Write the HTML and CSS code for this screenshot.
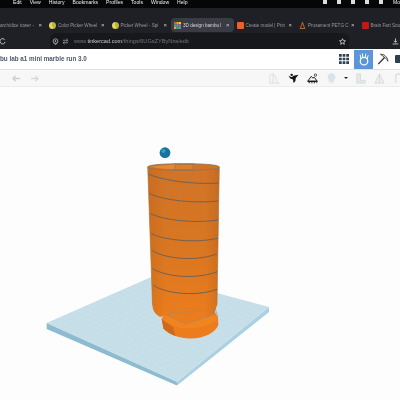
FILE: index.html
```html
<!DOCTYPE html>
<html lang="en">

<head>
	<meta charset="UTF-8">
	<title>Tinkercad - 3D design</title>
	<link rel="stylesheet" href="styles.css">
</head>

<body>
	<div class="menubar">
		<div class="menu-items">
			<span>Edit</span><span>View</span><span>History</span><span>Bookmarks</span><span>Profiles</span><span>Tools</span><span>Window</span><span>Help</span>
		</div>
		<div class="menu-status">
			<i class="status-dot"></i><i class="status-dot"></i><i class="status-dot"></i><i class="status-dot"></i><i class="status-dot"></i>
			<span>Mo</span>
		</div>
	</div>

	<div class="tabstrip">
		<div class="tab tab-first"><span class="tab-label">arch/dice tower -</span><span class="tab-close">×</span></div>
		<div class="tab"><i class="favicon fav-wheel"></i><span class="tab-label">Color Picker Wheel</span><span class="tab-close">×</span></div>
		<div class="tab"><i class="favicon fav-wheel"></i><span class="tab-label">Picker Wheel - Spi</span><span class="tab-close">×</span></div>
		<div class="tab tab-active">
			<svg class="favicon" viewBox="0 0 3 3"><rect width="1" height="1" fill="#e5534b"/><rect x="1" width="1" height="1" fill="#f0a030"/><rect x="2" width="1" height="1" fill="#e8d040"/><rect y="1" width="1" height="1" fill="#48a868"/><rect x="1" y="1" width="1" height="1" fill="#3fa0d8"/><rect x="2" y="1" width="1" height="1" fill="#e5534b"/><rect y="2" width="1" height="1" fill="#f0a030"/><rect x="1" y="2" width="1" height="1" fill="#48a868"/><rect x="2" y="2" width="1" height="1" fill="#3fa0d8"/></svg>
			<span class="tab-label">3D design bambu l</span><span class="tab-close">×</span>
		</div>
		<div class="tab"><i class="favicon fav-orange"></i><span class="tab-label">Create model | Prin</span><span class="tab-close">×</span></div>
		<div class="tab">
			<svg class="favicon" viewBox="0 0 8 8"><path d="M4 0.5 L6.5 7.5 H1.5 Z" fill="none" stroke="#b0603a" stroke-width="1.2"/></svg>
			<span class="tab-label">Prusament PETG C</span><span class="tab-close">×</span>
		</div>
		<div class="tab tab-last"><i class="favicon fav-red"></i><span class="tab-label">Brain Fart Sou</span></div>
	</div>

	<div class="addressbar">
		<svg class="reload" viewBox="0 0 8 8"><path d="M6.5 2 A3 3 0 1 0 7 4.5" fill="none" stroke="#ddd" stroke-width="1"/></svg>
		<div class="omnibox">
			<svg class="omni-icon" viewBox="0 0 8 8"><circle cx="4" cy="3.6" r="2.7" fill="none" stroke="#bbb" stroke-width="0.9"/><circle cx="4" cy="3.6" r="0.9" fill="#bbb"/><path d="M2.4 6 L4 7.8 L5.6 6" fill="none" stroke="#bbb" stroke-width="0.8"/></svg>
			<svg class="omni-icon" viewBox="0 0 8 8"><path d="M1 2.6 H6.5 M5 1 L6.8 2.6 L5 4.2 M7 5.4 H1.5 M3 3.8 L1.2 5.4 L3 7" fill="none" stroke="#aaa" stroke-width="0.8"/></svg>
			<span class="url">www.<b>tinkercad.com</b>/things/6UGsZYByNza/edit</span>
			<svg class="star" viewBox="0 0 8 8"><path d="M4 0.8 L5 3 L7.4 3.2 L5.5 4.8 L6.1 7.2 L4 5.9 L1.9 7.2 L2.5 4.8 L0.6 3.2 L3 3 Z" fill="none" stroke="#ddd" stroke-width="0.9"/></svg>
		</div>
		<svg class="download" viewBox="0 0 8 8"><path d="M4 0.5 V4.8 M2.2 3.2 L4 5 L5.8 3.2 M0.8 6.8 H7.2" fill="none" stroke="#ccc" stroke-width="1"/></svg>
	</div>

	<div class="titlebar">
		<span class="design-name">bu lab a1 mini marble run 3.0</span>
		<div class="title-tools">
			<svg class="grid-icon" viewBox="0 0 11 11"><path d="M0 0h3v3H0zM4 0h3v3H4zM8 0h3v3H8zM0 4h3v3H0zM4 4h3v3H4zM8 4h3v3H8zM0 8h3v3H0zM4 8h3v3H4zM8 8h3v3H8z" fill="#2c3e50"/></svg>
			<div class="mode-tile">
				<svg viewBox="0 0 14 16"><circle cx="7" cy="10" r="4.6" fill="none" stroke="#fff" stroke-width="1.5"/><path d="M3.2 7 L2.4 2.6 M5.4 5.4 L5.2 1 M8.6 5.4 L9.2 1.4 M10.8 7 L12 3.4" stroke="#fff" stroke-width="1.2" stroke-linecap="round"/></svg>
			</div>
			<svg class="pick-icon" viewBox="0 0 14 14"><path d="M1.5 13 L9 5" stroke="#333" stroke-width="1.6"/><path d="M4 1.6 C8 1 12 4 12.8 9.6 C11 6.4 8 4 4 1.6 Z" fill="#fff" stroke="#333" stroke-width="1"/></svg>
			<i class="clip-icon"></i>
		</div>
	</div>

	<div class="toolbar">
		<div class="history-tools">
			<svg viewBox="0 0 10 8"><path d="M4 1 L1 4 L4 7 M1 4 H9" fill="none" stroke="#c9ced3" stroke-width="1.5"/></svg>
			<svg viewBox="0 0 10 8"><path d="M6 1 L9 4 L6 7 M9 4 H1" fill="none" stroke="#d5d9dd" stroke-width="1.5"/></svg>
		</div>
		<div class="view-tools">
			<svg viewBox="0 0 12 12"><path d="M1 11 V2.5 L4.5 1 L7 4 L8.5 9 L11 11 Z M4.5 1 V11" fill="none" stroke="#dcdcd8" stroke-width="1"/></svg>
			<svg viewBox="0 0 12 12"><path d="M0.5 3 L4 4.5 L6 3 L11.5 2 L8.5 5.5 L8 9 L6 11 L5.5 7 L2.5 6 Z" fill="#111"/><circle cx="4" cy="2" r="1.3" fill="#111"/></svg>
			<svg viewBox="0 0 13 12"><path d="M1 9 L5 3.5 L7 5.5 L8.5 4.5 L12 9 Z" fill="none" stroke="#111" stroke-width="1.1"/><circle cx="10" cy="2" r="1.4" fill="none" stroke="#111" stroke-width="0.8"/><path d="M0.5 9.6 H12.5 M2 11 H3.5 M5 11 H6.5 M8 11 H9.5 M11 11 H12" stroke="#111" stroke-width="1.1"/></svg>
			<svg viewBox="0 0 10 12"><path d="M5 0.5 A4 4 0 0 1 7.4 7.6 V9 H2.6 V7.6 A4 4 0 0 1 5 0.5 Z M3.2 10.5 H6.8" fill="#d8e3ea" stroke="#d8e3ea"/></svg>
			<i class="caret"></i>
			<svg viewBox="0 0 12 12"><path d="M2 1 H6 V8 H11 V11 H2 Z" fill="#e6e9ea" stroke="#cfd4d6" stroke-width="0.8"/></svg>
			<svg viewBox="0 0 12 12"><path d="M6 1 L11 11 H1 Z M6 1 V11" fill="#eef0f0" stroke="#d4d7d8" stroke-width="0.9"/></svg>
			<svg viewBox="0 0 10 12"><path d="M2 11 V4 A3 3 0 0 1 8 4 V11" fill="none" stroke="#dadddd" stroke-width="1.4"/></svg>
		</div>
	</div>

	<div class="canvas">
		<svg class="scene" viewBox="0 87 400 313">
			<defs>
				<pattern id="plate-grid" width="1" height="1" patternUnits="userSpaceOnUse" patternTransform="matrix(5.35 -2.35 6.5 2.9 46.7 323)">
					<path d="M0 0 H1 M0 0 V1" stroke="#b5d2dd" stroke-width="0.05" fill="none"/>
				</pattern>
				<linearGradient id="body-side" x1="0" x2="1" y1="0" y2="0">
					<stop offset="0" stop-color="#b95f14" stop-opacity="0.35"/>
					<stop offset="0.25" stop-color="#b95f14" stop-opacity="0"/>
					<stop offset="0.8" stop-color="#b95f14" stop-opacity="0"/>
					<stop offset="1" stop-color="#a9591a" stop-opacity="0.35"/>
				</linearGradient>
				<linearGradient id="body-down" x1="0" x2="0" y1="0" y2="1">
					<stop offset="0" stop-color="#d07428"/>
					<stop offset="0.5" stop-color="#d87622"/>
					<stop offset="1" stop-color="#ec7d1c"/>
				</linearGradient>
			</defs>

			<!-- build plate -->
			<path d="M46.7 323 V329 L177 385.5 V381.7 Z" fill="#8dbbd0"/>
			<path d="M177 381.7 V385.5 L269 312 V307 Z" fill="#a9d1e1"/>
			<path d="M46.7 323 L153.6 276 L269 307 L177 381.7 Z" fill="#c7dfe8"/>
			<path d="M46.7 323 L153.6 276 L269 307 L177 381.7 Z" fill="url(#plate-grid)"/>

			<!-- base disc -->
			<path d="M161.7 318.5 L163.5 328.5 C170 335 180 338.5 190 338.5 C205 338.5 216 332 218.3 325 L218 318 L214 310 L166 312 Z" fill="#ec7c1c"/>
			<path d="M161.7 319 L173 327 L175.5 336 C170 334 166 331.5 163.5 328.5 Z" fill="#cf6a1a"/>
			<path d="M161.7 318.5 L166.7 315 L185 324 L213 315 L218 318 C216 323 208 327 190 328.5 C178 329 168 325 161.7 318.5 Z" fill="#f0841f"/>

			<!-- body -->
			<path d="M147.7 167 C147.7 162.5 219.3 162.5 219.3 167 L217 305 L214 314 L185 324 L166.7 315 L160 317 C155 314 152.5 310 152.5 305 Z" fill="url(#body-down)"/>
			<path d="M147.7 167 C147.7 162.5 219.3 162.5 219.3 167 L217 305 L214 314 L185 324 L166.7 315 L160 317 C155 314 152.5 310 152.5 305 Z" fill="url(#body-side)"/>
			<path class="body-edge" d="M147.7 167 L152.5 305 M219.3 167 L217 305"/>

			<!-- top opening -->
			<path d="M147.7 167 C147.7 162.5 219.3 162.5 219.3 167 C219.3 171.5 147.7 171.5 147.7 167 Z" fill="#cf7424" stroke="#8b7260" stroke-width="0.8"/>
			<path d="M151 166.5 L175 164.5 L175 169 C165 169 157 168.5 151 166.5 Z" fill="#e08a38"/>
			<path d="M175 164.5 H193 V169.5 H175 Z" fill="#dc7e2a" stroke="#8b7260" stroke-width="0.6"/>

			<!-- rings -->
			<g class="rings">
				<path d="M148.5 174 C158 179 190 185 218.5 183"/>
				<path d="M149.3 193.3 C159 199 190 204 218.3 201"/>
				<path d="M150 213.3 C160 219 190 224 218.3 220"/>
				<path d="M151 233.3 C160 239 192 244 217.7 238.3"/>
				<path d="M151.7 250 C160 257 192 263 216.7 254"/>
				<path d="M152.3 268.3 C161 275 192 281 217.3 271.7"/>
				<path d="M153.3 285 C162 292 192 298 217.3 289.3"/>
			</g>

			<!-- notch on the base -->
			<g class="notch">
				<path d="M166.7 315 L185 324 L213 315"/>
				<path d="M166.7 315 L172 312.5 L210 311"/>
				<path d="M213 315 L215 308 L218 317"/>
			</g>

			<!-- marble -->
			<circle cx="165" cy="152.7" r="5.4" fill="#14759e"/>
			<circle cx="163.5" cy="151" r="2" fill="#3d9cc0"/>
		</svg>
	</div>
</body>

</html>
```

FILE: styles.css
```css
* {
	box-sizing: border-box;
}

body {
	margin: 0;
	width: 400px;
	height: 400px;
	overflow: hidden;
	font-family: "Liberation Sans", sans-serif;
	background-color: #fdfdfd;
	display: flex;
	flex-direction: column;
	filter: blur(0.3px);
}

svg {
	display: block;
}

.menubar {
	flex: 0 0 8px;
	background-color: #060606;
	color: #efefef;
	font-size: 5.1px;
	line-height: 5px;
	display: flex;
	justify-content: space-between;
	overflow: hidden;
}
.menu-items {
	display: flex;
	gap: 8px;
	padding-left: 13px;
}
.menu-status {
	display: flex;
	align-items: flex-start;
	gap: 10px;
}
.status-dot {
	width: 4px;
	height: 4px;
	background-color: #ddd;
}

.tabstrip {
	flex: 0 0 25px;
	background-color: #1f2025;
	display: grid;
	grid-template-columns: 46px repeat(5, 62.5px) 1fr;
	padding-top: 10px;
	padding-bottom: 1px;
	color: #98989c;
	font-size: 4.6px;
}
.tab {
	display: flex;
	align-items: center;
	gap: 2px;
	padding: 0 4px 0 3px;
	border-radius: 4px;
	overflow: hidden;
	white-space: nowrap;
}
.tab-first {
	padding-left: 0;
}
.tab-last {
	padding-right: 0;
}
.tab-active {
	background-color: #3a3b45;
	color: #d8d8dc;
}
.tab-label {
	flex: 1;
}
.tab-close {
	color: #d0d0d0;
	font-size: 6px;
}
.favicon {
	flex: 0 0 7px;
	width: 7px;
	height: 7px;
}
.fav-wheel {
	border-radius: 50%;
	background: conic-gradient(#b9b63a 0 50%, #e3d65a 50% 100%);
}
.fav-orange {
	background-color: #e8632a;
	border-radius: 1px;
}
.fav-red {
	background-color: #c01818;
	border-radius: 1px;
}

.addressbar {
	flex: 0 0 16px;
	background-color: #1f2025;
	display: flex;
	align-items: center;
}
.reload {
	width: 7px;
	height: 7px;
	margin-left: -1px;
}
.omnibox {
	margin-left: 44px;
	width: 299px;
	height: 16px;
	background-color: #17181c;
	border-radius: 6px 6px 0 0;
	display: flex;
	align-items: center;
	gap: 3px;
	padding-left: 2px;
	padding-right: 3px;
}
.omni-icon {
	width: 7px;
	height: 7px;
}
.url {
	flex: 1;
	margin-left: 2px;
	color: #74757a;
	font-size: 5.6px;
	white-space: nowrap;
}
.url b {
	color: #c8c8cc;
	font-weight: normal;
}
.star {
	width: 7px;
	height: 7px;
}
.download {
	width: 7px;
	height: 7px;
	margin-left: 43px;
}

.titlebar {
	flex: 0 0 20px;
	background-color: #fff;
	display: flex;
	justify-content: space-between;
	align-items: center;
	overflow: hidden;
}
.design-name {
	font-size: 6.3px;
	font-weight: bold;
	color: #4d5866;
	margin-bottom: 1px;
}
.title-tools {
	display: flex;
	align-items: center;
	height: 100%;
}
.grid-icon {
	width: 10px;
	height: 10px;
	margin-right: 5px;
}
.mode-tile {
	width: 19px;
	height: 19px;
	background-color: #5a96d8;
	display: flex;
	align-items: center;
	justify-content: center;
}
.mode-tile svg {
	width: 12px;
	height: 13px;
}
.pick-icon {
	width: 12px;
	height: 12px;
	margin-left: 4px;
}
.clip-icon {
	width: 5px;
	height: 8px;
	margin-left: 6px;
	background-color: #2c3e50;
	border-radius: 1px 0 0 1px;
}

.toolbar {
	flex: 0 0 18px;
	background-color: #f7f7f7;
	border-top: 1px solid #e2e2e2;
	border-bottom: 1px solid #ececec;
	display: flex;
	justify-content: space-between;
	align-items: center;
}
.history-tools {
	display: flex;
	gap: 9px;
	padding-left: 12px;
}
.history-tools svg {
	width: 9px;
	height: 7px;
}
.view-tools {
	display: flex;
	align-items: center;
	gap: 8px;
	margin-right: -4px;
}
.view-tools svg {
	width: 11px;
	height: 11px;
}
.caret {
	width: 0;
	height: 0;
	margin: 0 -1px;
	border-left: 2px solid transparent;
	border-right: 2px solid transparent;
	border-top: 2px solid #222;
}

.canvas {
	flex: 1;
	background-color: #fdfdfd;
}
.scene {
	width: 400px;
	height: 313px;
}
.body-edge {
	fill: none;
	stroke: #a8763f;
	stroke-width: 0.6;
}
.rings path {
	fill: none;
	stroke: #6f6258;
	stroke-width: 1;
}
.notch path {
	fill: none;
	stroke: #a8876a;
	stroke-width: 0.6;
}
```
